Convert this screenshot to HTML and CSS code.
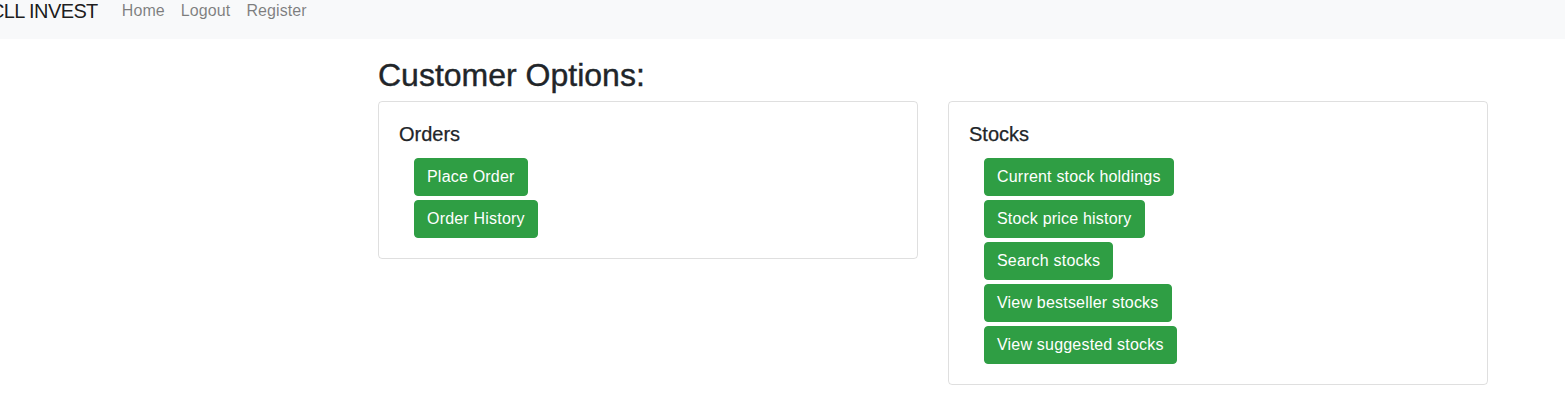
FILE: index.html
```html
<!DOCTYPE html>
<html lang="en">
<head>
<meta charset="utf-8">
<title>CLL INVEST</title>
<link rel="stylesheet" href="styles.css">
</head>
<body>
<nav class="navbar">
  <a class="brand" href="#">CLL INVEST</a>
  <ul class="nav">
    <li><a class="nav-link" href="#">Home</a></li>
    <li><a class="nav-link" href="#">Logout</a></li>
    <li><a class="nav-link" href="#">Register</a></li>
  </ul>
</nav>
<main class="main">
  <h2 class="page-title">Customer Options:</h2>
  <div class="cards">
    <section class="card">
      <h5 class="card-title">Orders</h5>
      <div class="btn-list">
        <a class="btn" href="#">Place Order</a>
        <a class="btn" href="#">Order History</a>
      </div>
    </section>
    <section class="card">
      <h5 class="card-title">Stocks</h5>
      <div class="btn-list">
        <a class="btn" href="#">Current stock holdings</a>
        <a class="btn" href="#">Stock price history</a>
        <a class="btn" href="#">Search stocks</a>
        <a class="btn" href="#">View bestseller stocks</a>
        <a class="btn" href="#">View suggested stocks</a>
      </div>
    </section>
  </div>
</main>
</body>
</html>
```
FILE: styles.css
```css
* { box-sizing: border-box; }
html, body { margin: 0; padding: 0; }
body {
  font-family: "Liberation Sans", Arial, sans-serif;
  font-size: 16px;
  line-height: 1.5;
  color: #212529;
  background: #fff;
  overflow: hidden;
}
a { text-decoration: none; }

.navbar {
  height: 39px;
  background: #f8f9fa;
  display: flex;
  align-items: flex-end;
  padding: 0 0 8px 0;
  overflow: hidden;
}
.brand {
  margin-left: -10px;
  margin-right: 16px;
  padding-bottom: 5px;
  font-size: 20px;
  line-height: 30px;
  letter-spacing: -0.6px;
  color: rgba(0, 0, 0, 0.9);
  white-space: nowrap;
}
.nav {
  display: flex;
  list-style: none;
  margin: 0;
  padding: 0;
}
.nav-link {
  display: block;
  padding: 0 8px 8px;
  line-height: 24px;
  letter-spacing: 0.1px;
  color: rgba(0, 0, 0, 0.5);
}

.main {
  margin-left: 378px;
  width: 1110px;
  padding-top: 17px;
}
.page-title {
  margin: 0 0 7px;
  font-size: 32px;
  font-weight: 500;
  line-height: 1.2;
  -webkit-text-stroke: 0.4px #212529;
}
.cards {
  display: flex;
  gap: 30px;
  align-items: flex-start;
}
.card {
  flex: 1;
  border: 1px solid rgba(0, 0, 0, 0.125);
  border-radius: 4px;
  padding: 20px;
}
.card-title {
  margin: 0 0 12px;
  font-size: 20px;
  font-weight: 500;
  line-height: 1.2;
  -webkit-text-stroke: 0.25px #212529;
}
.btn-list {
  display: flex;
  flex-direction: column;
  align-items: flex-start;
  gap: 4px;
  padding-left: 15px;
}
.btn {
  display: inline-block;
  padding: 6px 12px;
  border: 1px solid #2f9e44;
  border-radius: 4px;
  background: #2f9e44;
  color: #fff;
  font-size: 16px;
  line-height: 24px;
  letter-spacing: 0.2px;
  white-space: nowrap;
}
```
